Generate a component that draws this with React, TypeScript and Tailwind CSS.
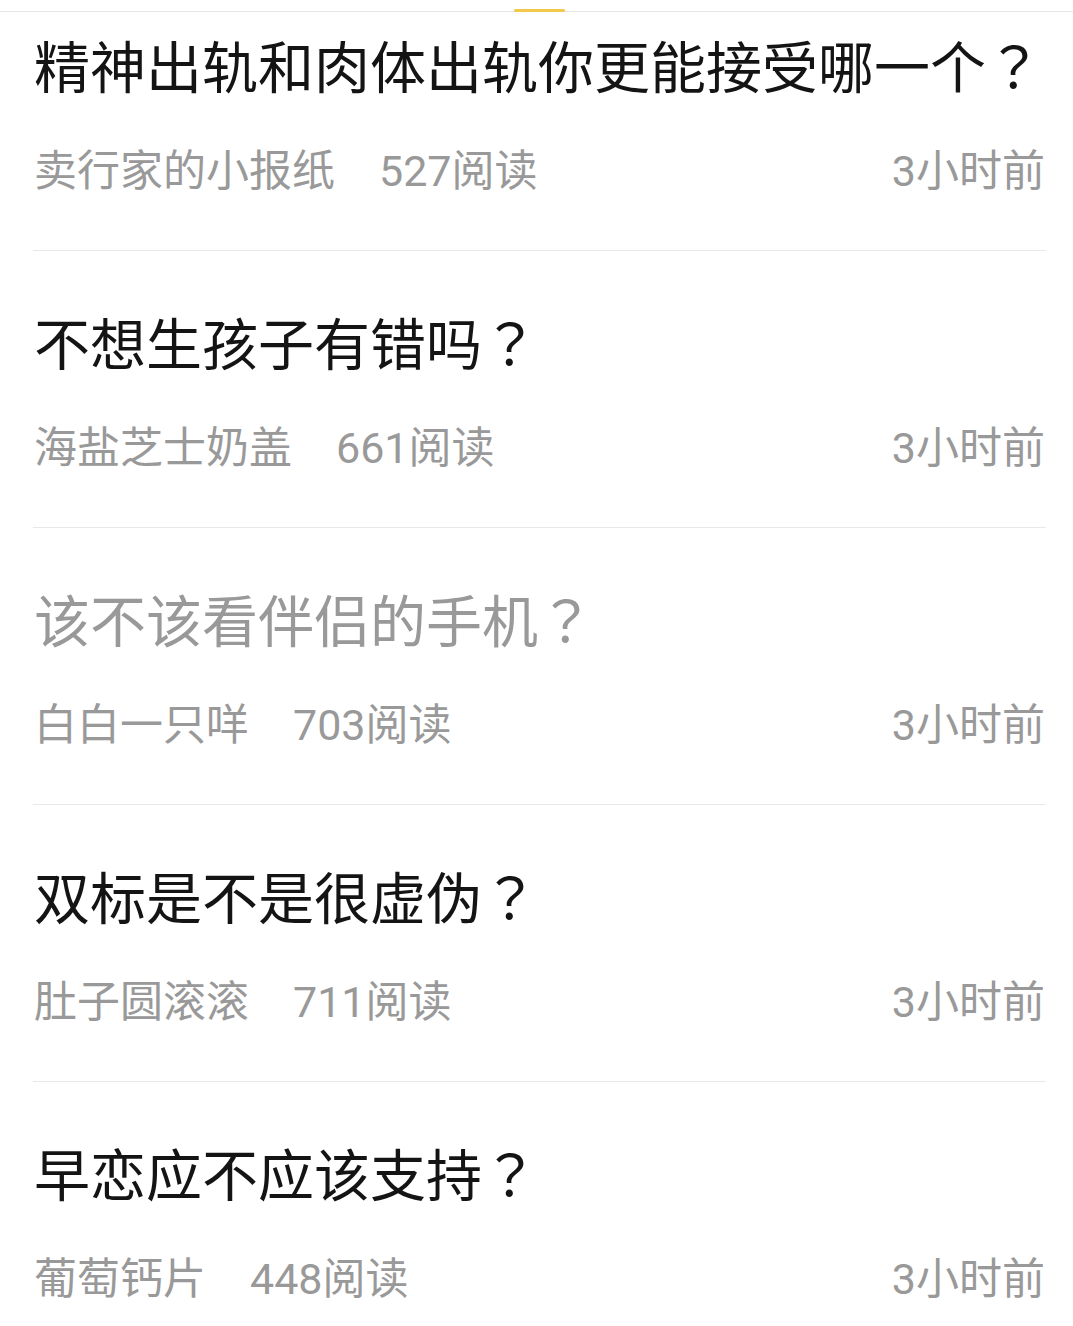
const items = [
  { title: "精神出轨和肉体出轨你更能接受哪一个", author: "卖行家的小报纸", reads: 527, read: false },
  { title: "不想生孩子有错吗", author: "海盐芝士奶盖", reads: 661, read: false },
  { title: "该不该看伴侣的手机", author: "白白一只咩", reads: 703, read: true },
  { title: "双标是不是很虚伪", author: "肚子圆滚滚", reads: 711, read: false },
  { title: "早恋应不应该支持", author: "葡萄钙片", reads: 448, read: false },
];

export default function App() {
  return (
    <div className="w-[1073px] h-[1326px] overflow-hidden bg-white">
      <div className="h-[12px] border-b border-[#e6e6e6] flex items-end justify-center">
        <div className="w-[51px] h-[3px] mb-[-1px] ml-[6px] bg-[#f2c94c] rounded-sm" />
      </div>
      <ul>
        {items.map((it, i) => (
          <li
            key={it.title}
            className={`ml-[33px] mr-[27px] border-b border-[#e8e8e8] pb-[57px] ${i === 0 ? "pt-[24px]" : "pt-[62px]"}`}
          >
            <div
              className={`pl-[1px] text-[56px] leading-[56px] whitespace-nowrap font-['Noto_Sans_CJK_SC',sans-serif] ${it.read ? "text-[#999999]" : "text-[#141414]"}`}
            >
              {it.title}
              <span className="font-['Noto_Sans_CJK_JP',sans-serif]">？</span>
            </div>
            <div className="mt-[58px] pl-[1px] pr-[1px] flex items-center text-[43px] leading-[43px] text-[#999999] font-['Roboto','Noto_Sans_CJK_SC',sans-serif]">
              <span>{it.author}</span>
              <span className="ml-[44px]">{it.reads}阅读</span>
              <span className="ml-auto">3小时前</span>
            </div>
          </li>
        ))}
      </ul>
    </div>
  );
}
